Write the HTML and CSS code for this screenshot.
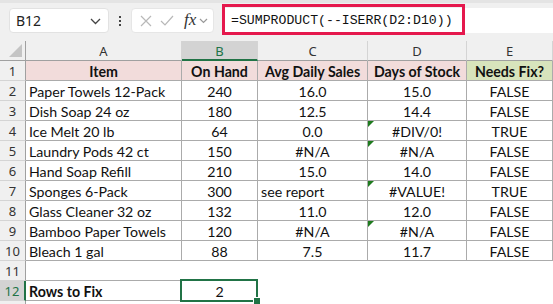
FILE: index.html
```html
<!DOCTYPE html>
<html>
<head>
<meta charset="utf-8">
<link rel="stylesheet" href="styles.css">
</head>
<body>
<div class="app">
  <div class="fbar">
    <div class="namebox">
      <span class="nametext">B12</span>
      <svg class="chev" width="11" height="7" viewBox="0 0 11 7"><path d="M1 1 L5.5 5.5 L10 1" fill="none" stroke="#444" stroke-width="1.3"/></svg>
    </div>
    <div class="dots"><i></i><i></i><i></i></div>
    <div class="fbtns">
      <svg class="ico-x" width="12" height="12" viewBox="0 0 12 12"><path d="M1 1 L11 11 M11 1 L1 11" stroke="#b8b8b8" stroke-width="1.2" fill="none"/></svg>
      <svg class="ico-ok" width="14" height="11" viewBox="0 0 14 11"><path d="M1 6 L5 10 L13 1" stroke="#b8b8b8" stroke-width="1.2" fill="none"/></svg>
      <span class="fx">fx</span>
      <svg class="chev2" width="9" height="6" viewBox="0 0 9 6"><path d="M1 1 L4.5 4.5 L8 1" fill="none" stroke="#999" stroke-width="1.2"/></svg>
    </div>
    <div class="finput">
      <span class="ftext">=SUMPRODUCT(--ISERR(D2:D10))</span>
      <div class="hl"></div>
    </div>
  </div>
  <div class="sheet">
    <div class="h corner"><span class="tri"></span></div>
    <div class="h">A</div>
    <div class="h sel">B</div>
    <div class="h">C</div>
    <div class="h">D</div>
    <div class="h">E</div>

    <div class="r">1</div>
    <div class="c hd pink">Item</div>
    <div class="c hd pink">On Hand</div>
    <div class="c hd pink">Avg Daily Sales</div>
    <div class="c hd pink">Days of Stock</div>
    <div class="c hd green">Needs Fix?</div>

    <div class="r">2</div>
    <div class="c l">Paper Towels 12-Pack</div>
    <div class="c">240</div>
    <div class="c">16.0</div>
    <div class="c">15.0</div>
    <div class="c">FALSE</div>

    <div class="r">3</div>
    <div class="c l">Dish Soap 24 oz</div>
    <div class="c">180</div>
    <div class="c">12.5</div>
    <div class="c">14.4</div>
    <div class="c">FALSE</div>

    <div class="r">4</div>
    <div class="c l">Ice Melt 20 lb</div>
    <div class="c">64</div>
    <div class="c">0.0</div>
    <div class="c err">#DIV/0!</div>
    <div class="c">TRUE</div>

    <div class="r">5</div>
    <div class="c l">Laundry Pods 42 ct</div>
    <div class="c">150</div>
    <div class="c">#N/A</div>
    <div class="c err">#N/A</div>
    <div class="c">FALSE</div>

    <div class="r">6</div>
    <div class="c l">Hand Soap Refill</div>
    <div class="c">210</div>
    <div class="c">15.0</div>
    <div class="c">14.0</div>
    <div class="c">FALSE</div>

    <div class="r">7</div>
    <div class="c l">Sponges 6-Pack</div>
    <div class="c">300</div>
    <div class="c l">see report</div>
    <div class="c err">#VALUE!</div>
    <div class="c">TRUE</div>

    <div class="r">8</div>
    <div class="c l">Glass Cleaner 32 oz</div>
    <div class="c">132</div>
    <div class="c">11.0</div>
    <div class="c">12.0</div>
    <div class="c">FALSE</div>

    <div class="r">9</div>
    <div class="c l">Bamboo Paper Towels</div>
    <div class="c">120</div>
    <div class="c">#N/A</div>
    <div class="c err">#N/A</div>
    <div class="c">FALSE</div>

    <div class="r">10</div>
    <div class="c l">Bleach 1 gal</div>
    <div class="c">88</div>
    <div class="c">7.5</div>
    <div class="c">11.7</div>
    <div class="c">FALSE</div>

    <div class="r">11</div>
    <div class="c l edge"></div>
    <div class="c none"></div>
    <div class="c none"></div>
    <div class="c none"></div>
    <div class="c none"></div>

    <div class="r rsel">12</div>
    <div class="c l b edge">Rows to Fix</div>
    <div class="c active">2</div>
    <div class="c none"></div>
    <div class="c none"></div>
    <div class="c none"></div>

    <div class="r"></div>
    <div class="c none"></div>
    <div class="c none"></div>
    <div class="c none"></div>
    <div class="c none"></div>
    <div class="c none"></div>
  </div>
</div>
</body>
</html>
```

FILE: styles.css
```css
* { box-sizing: border-box; }
html, body { margin: 0; padding: 0; }
body {
  width: 553px;
  height: 304px;
  overflow: hidden;
  background: #fff;
  font-family: Lato, "Liberation Sans", sans-serif;
}
.app { width: 553px; }

.fbar {
  height: 41px;
  background: #f0f0f0;
  border-top: 3px solid #e4e4e4;
  display: flex;
  align-items: flex-start;
  padding-top: 5px;
}
.namebox {
  margin-left: 9px;
  width: 100px;
  height: 25px;
  background: #fff;
  border: 1px solid #e2e2e2;
  border-radius: 4px;
  display: flex;
  align-items: center;
  justify-content: space-between;
  padding: 0 7px 0 6px;
}
.nametext {
  font-family: "Noto Sans", "Liberation Sans", sans-serif;
  font-size: 14px;
  color: #222;
}
.chev { margin-top: 1px; }
.dots {
  width: 22px;
  height: 25px;
  display: flex;
  flex-direction: column;
  align-items: center;
  justify-content: center;
  gap: 2px;
}
.dots i {
  display: block;
  width: 2px;
  height: 2px;
  background: #444;
}
.fbtns {
  width: 83px;
  height: 25px;
  background: #fff;
  border: 1px solid #e6e6e6;
  border-radius: 4px;
  display: flex;
  align-items: center;
  padding-left: 8px;
}
.ico-x { margin-right: 8px; }
.ico-ok { margin-right: 10px; }
.fx {
  font-family: "Liberation Serif", serif;
  font-style: italic;
  font-size: 17px;
  color: #333;
  margin-top: -2px;
  margin-right: 3px;
}
.chev2 { margin-top: 1px; }
.finput {
  position: relative;
  margin-left: 8px;
  flex: 1;
  height: 25px;
  background: #fff;
  display: flex;
  align-items: center;
  padding-left: 9px;
}
.ftext {
  font-family: "Liberation Mono", monospace;
  font-size: 13.2px;
  color: #111;
}
.hl {
  position: absolute;
  left: 0;
  top: -4px;
  width: 243px;
  height: 31px;
  border: 3px solid #e5184d;
}

.sheet {
  display: grid;
  grid-template-columns: 26px 156px 76px 110px 99px 86px;
  grid-template-rows: 20px;
  grid-auto-rows: 20px;
}
.h {
  background: #f0f0f0;
  border-right: 1px solid #d4d4d4;
  border-bottom: 1px solid #a0a0a0;
  display: flex;
  align-items: center;
  justify-content: center;
  font-family: "Noto Sans", "Liberation Sans", sans-serif;
  font-size: 13px;
  color: #333;
  padding-top: 1px;
}
.h.corner {
  position: relative;
  border-right: 1px solid #a0a0a0;
}
.tri {
  position: absolute;
  right: 3px;
  bottom: 3px;
  width: 0;
  height: 0;
  border-left: 13px solid transparent;
  border-bottom: 13px solid #c4c4c4;
}
.h.sel {
  background: #d3d3d3;
  color: #217346;
  border-bottom: 2px solid #217346;
}
.r {
  background: #f0f0f0;
  border-right: 1px solid #a0a0a0;
  border-bottom: 1px solid #d4d4d4;
  display: flex;
  align-items: center;
  justify-content: center;
  font-family: "Noto Sans", "Liberation Sans", sans-serif;
  font-size: 13px;
  color: #333;
  padding-top: 1px;
}
.r.rsel {
  background: #d3d3d3;
  color: #217346;
  border-right: 2px solid #217346;
}
.c {
  position: relative;
  border-right: 1px solid #ababab;
  border-bottom: 1px solid #ababab;
  display: flex;
  align-items: center;
  justify-content: center;
  font-size: 14.2px;
  color: #111;
  padding-top: 2px;
  white-space: nowrap;
}
.c.l { justify-content: flex-start; padding-left: 3px; }
.c.hd { font-weight: bold; }
.c.b { font-weight: bold; }
.pink { background: #f2dcdb; }
.green { background: #d8e4bc; }
.c.none { border-color: transparent; }
.c.edge { border-right-color: transparent; }
.err::before {
  content: "";
  position: absolute;
  left: 0;
  top: 0;
  width: 0;
  height: 0;
  border-top: 6px solid #1e7b1e;
  border-right: 6px solid transparent;
}
.active { border-color: transparent; }
.active::after {
  content: "";
  position: absolute;
  left: -2px;
  top: -2px;
  right: -1px;
  bottom: -2px;
  border: 2px solid #217346;
}
.active::before {
  content: "";
  position: absolute;
  right: -4px;
  bottom: -5px;
  width: 6px;
  height: 6px;
  background: #217346;
  border: 1px solid #fff;
  z-index: 2;
}
```
